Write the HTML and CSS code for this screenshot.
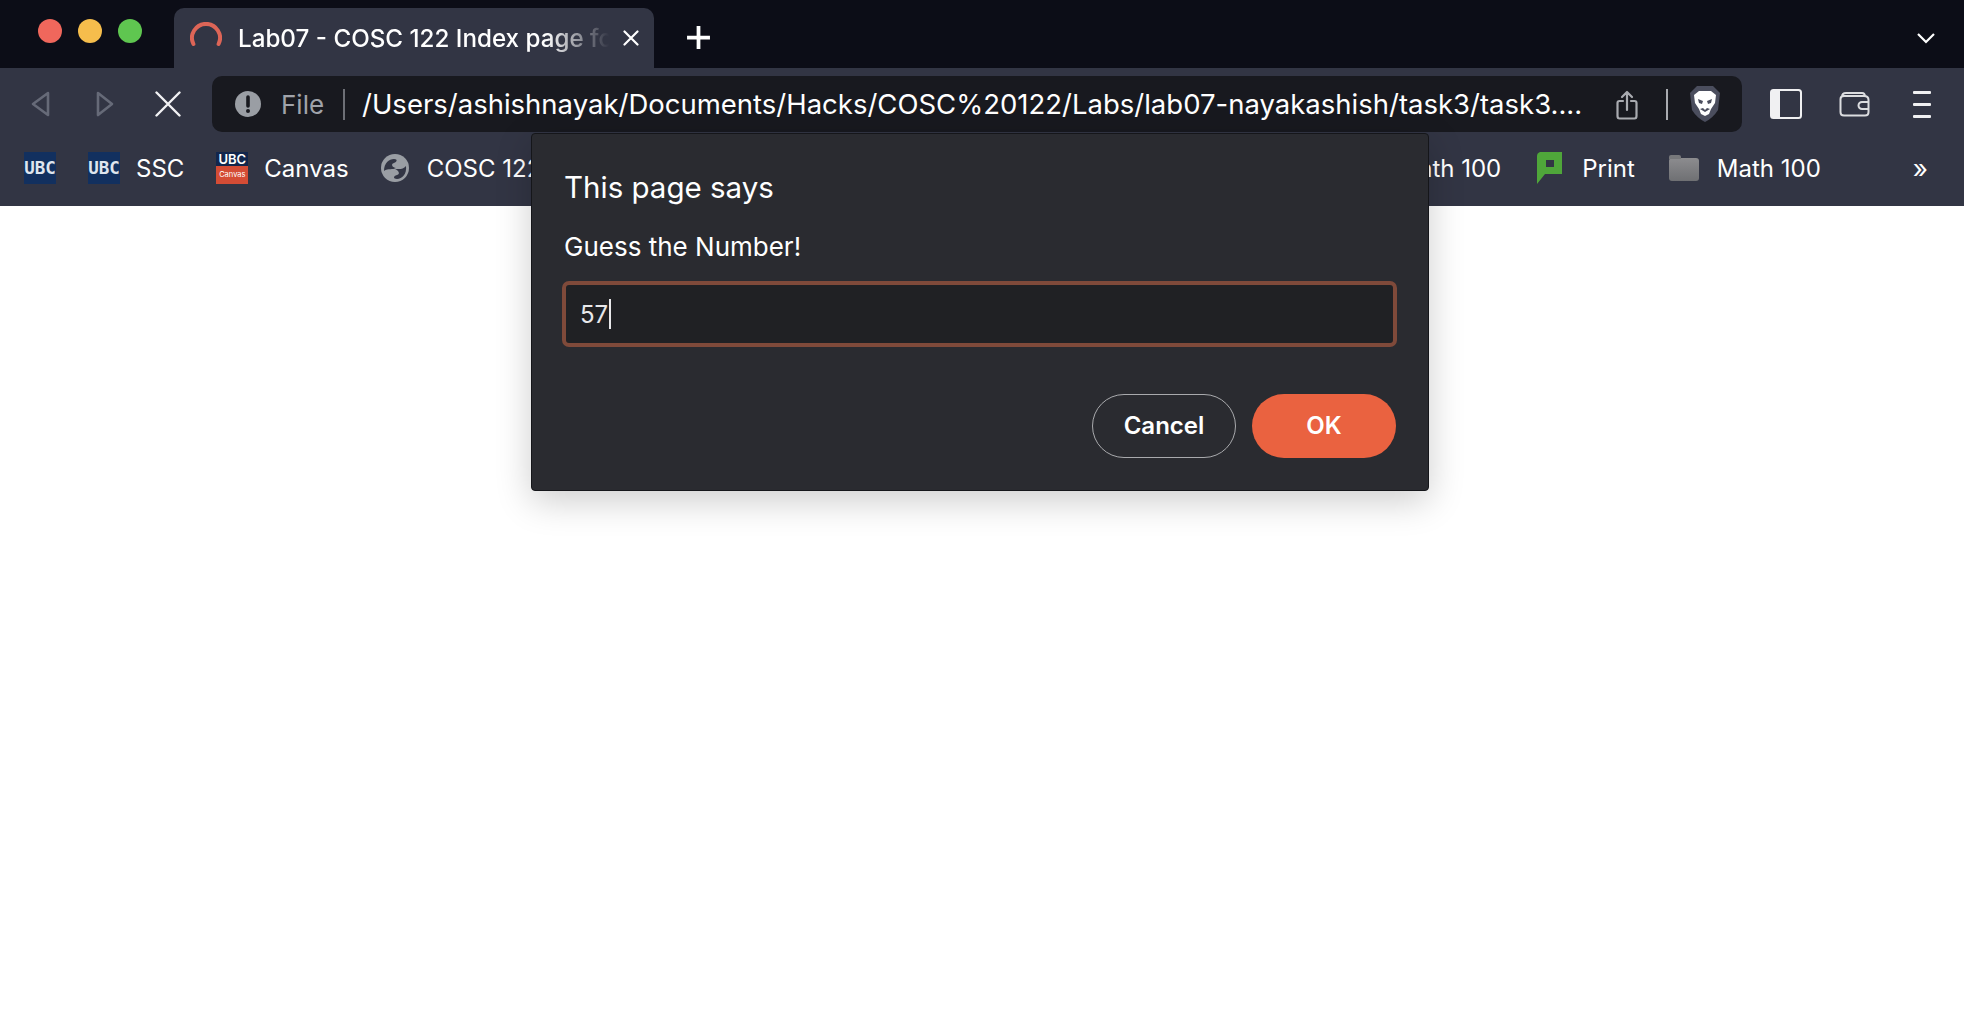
FILE: index.html
```html
<!DOCTYPE html>
<html>
<head>
    <title>Lab07 - COSC 122 Index page</title>
    <link rel="stylesheet" href="styles.css">
</head>
<body>
    <div class="tabstrip">
        <div class="lights">
            <span class="light red"></span>
            <span class="light yellow"></span>
            <span class="light green"></span>
        </div>
        <div class="tab">
            <svg class="spinner" viewBox="0 0 32 32"><path d="M3.4 22 A14 14 0 1 1 28.6 22" fill="none" stroke="#dd6557" stroke-width="4" stroke-linecap="round"/></svg>
            <span class="tab-title">Lab07 - COSC 122 Index page for Lab 7</span>
            <svg class="tab-close" viewBox="0 0 16 16"><path d="M1.5 1.5 L14.5 14.5 M14.5 1.5 L1.5 14.5" stroke="#fff" stroke-width="2.2" stroke-linecap="round"/></svg>
        </div>
        <svg class="new-tab" viewBox="0 0 24 24"><path d="M12 1 V23 M1 12 H23" stroke="#fff" stroke-width="3.6"/></svg>
        <svg class="tab-menu" viewBox="0 0 20 12"><path d="M2 2 L10 10 L18 2" fill="none" stroke="#fff" stroke-width="2.2"/></svg>
    </div>

    <div class="toolbar">
        <div class="nav">
            <svg class="nav-back" viewBox="0 0 19 26"><path d="M17 2 L2 13 L17 24 Z" fill="none" stroke="#666a78" stroke-width="2.6" stroke-linejoin="round"/></svg>
            <svg class="nav-forward" viewBox="0 0 18 26"><path d="M2 2 L16 13 L2 24 Z" fill="none" stroke="#666a78" stroke-width="2.6" stroke-linejoin="round"/></svg>
            <svg class="nav-stop" viewBox="0 0 26 26"><path d="M1.5 1.5 L24.5 24.5 M24.5 1.5 L1.5 24.5" stroke="#f2f2f4" stroke-width="2.4" stroke-linecap="round"/></svg>
        </div>
        <div class="addressbar">
            <svg class="warn" viewBox="0 0 26 26"><circle cx="13" cy="13" r="13" fill="#9a9ea4"/><path d="M13 6 V15" stroke="#18191f" stroke-width="3.6" stroke-linecap="round"/><circle cx="13" cy="20" r="2" fill="#18191f"/></svg>
            <span class="scheme">File</span>
            <span class="addr-divider"></span>
            <span class="url">/Users/ashishnayak/Documents/Hacks/COSC%20122/Labs/lab07-nayakashish/task3/task3....</span>
            <svg class="share" viewBox="0 0 22 30"><path d="M7 11 H3.5 Q1.5 11 1.5 13 V26 Q1.5 28.5 3.5 28.5 H18.5 Q20.5 28.5 20.5 26 V13 Q20.5 11 18.5 11 H15 M11 20 V2 M6 7 L11 2 L16 7" fill="none" stroke="#a9abb0" stroke-width="2.2" stroke-linecap="round" stroke-linejoin="round"/></svg>
            <span class="addr-divider right"></span>
            <svg class="lion" viewBox="0 0 32 38">
                <path d="M8 1 H24 L31 8 L29 25 Q24 33 16 37 Q8 33 3 25 L1 8 Z" fill="#4b4e5e"/>
                <path d="M10 6 H22 L27 10 L26 18 L22 24 L20 29 L16 31 L12 29 L10 24 L6 18 L5 10 Z" fill="#fff"/>
                <path d="M9 14 L14 16 L13 19 L10 18 Z M23 14 L18 16 L19 19 L22 18 Z M11 24 L14 23 L16 25 L18 23 L21 24 L16 27 Z" fill="#4b4e5e"/>
            </svg>
        </div>
        <div class="tools">
            <svg class="sidebar" viewBox="0 0 32 30"><rect x="1" y="1" width="30" height="28" rx="2.5" fill="none" stroke="#f0f0f2" stroke-width="2"/><rect x="1" y="1" width="9" height="28" fill="#f0f0f2"/></svg>
            <svg class="wallet" viewBox="0 0 31 26"><path d="M3 6 Q3 2 7 2 H23 Q26 2 26 6 M1.5 8 Q1.5 5 5 5 H25 Q29.5 5 29.5 9 V21 Q29.5 24.5 26 24.5 H5 Q1.5 24.5 1.5 21 Z" fill="none" stroke="#dcdde0" stroke-width="2"/><path d="M29 11 H23 A3.5 3.5 0 0 0 23 18 H29" fill="none" stroke="#dcdde0" stroke-width="2"/></svg>
            <div class="menu"><span></span><span></span><span></span></div>
        </div>
    </div>

    <div class="bookmarks">
        <div class="bm-left">
            <div class="bm">
                <div class="ubc-icon">UBC</div>
            </div>
            <div class="bm">
                <div class="ubc-icon">UBC</div>
                <span>SSC</span>
            </div>
            <div class="bm">
                <div class="canvas-icon"><b>UBC</b><i>Canvas</i></div>
                <span>Canvas</span>
            </div>
            <div class="bm bm-cosc">
                <svg class="globe" viewBox="0 0 28 28"><circle cx="14" cy="14" r="14" fill="#9a9ea4"/><path d="M3 17 C3 9 8 5 13 5 C17 5 16 8 13 9 C9 10 12 14 15 14 C12 16 7 14 3 17 Z M25 12 C26 20 21 25 16 25 C12 25 12 22 16 21 C20 20 17 16 14 15 C18 15 22 16 25 12 Z" fill="#323544"/></svg>
                <span>COSC 122</span>
            </div>
        </div>
        <div class="bm-right">
            <div class="bm"><span>Math 100</span></div>
            <div class="bm print">
                <svg class="print-icon" viewBox="0 0 25 32"><path d="M3 0 H25 V22 H8 L0 32 V4 Q0 1 3 0 Z" fill="#4fa63a"/><rect x="9" y="8" width="8" height="7" fill="#323544"/></svg>
                <span>Print</span>
            </div>
            <div class="bm">
                <div class="folder"></div>
                <span>Math 100</span>
            </div>
            <span class="more">»</span>
        </div>
    </div>

    <div class="page"></div>

    <div class="dialog">
        <h2 class="dialog-title">This page says</h2>
        <p class="dialog-msg">Guess the Number!</p>
        <div class="dialog-input"><span>57</span><span class="caret"></span></div>
        <div class="dialog-buttons">
            <button class="btn btn-cancel">Cancel</button>
            <button class="btn btn-ok">OK</button>
        </div>
    </div>
</body>
</html>
```

FILE: styles.css
```css
* {
    box-sizing: border-box;
}

html,
body {
    height: 100%;
}

body {
    margin: 0;
    display: flex;
    flex-direction: column;
    font-family: Inter, "Noto Sans", sans-serif;
    background-color: #fff;
    color: #fff;
    overflow: hidden;
}

svg {
    display: block;
    flex: none;
}

/* tab strip */
.tabstrip {
    height: 68px;
    flex: none;
    display: flex;
    align-items: flex-end;
    padding-left: 38px;
    padding-right: 28px;
    background-color: #0c0d17;
}

.lights {
    display: flex;
    gap: 16px;
    align-self: flex-start;
    margin-top: 19px;
}

.light {
    width: 24px;
    height: 24px;
    border-radius: 50%;
}

.red {
    background-color: #f0675c;
}

.yellow {
    background-color: #f6bd4c;
}

.green {
    background-color: #5fc650;
}

.tab {
    width: 480px;
    height: 60px;
    margin-left: 32px;
    padding: 0 15px 0 16px;
    display: flex;
    align-items: center;
    background-color: #323544;
    border-radius: 10px 10px 0 0;
}

.spinner {
    width: 32px;
    height: 32px;
}

.tab-title {
    flex: 1;
    margin-left: 16px;
    font-size: 24.2px;
    font-weight: 500;
    white-space: nowrap;
    overflow: hidden;
    -webkit-mask-image: linear-gradient(to right, #000 82%, transparent 99%);
    mask-image: linear-gradient(to right, #000 82%, transparent 99%);
}

.tab-close {
    width: 16px;
    height: 16px;
    margin-left: 10px;
}

.new-tab {
    width: 25px;
    height: 25px;
    margin-left: 32px;
    margin-bottom: 18px;
}

.tab-menu {
    width: 20px;
    height: 12px;
    margin-left: auto;
    margin-bottom: 24px;
}

/* toolbar */
.toolbar {
    height: 64px;
    flex: none;
    display: flex;
    padding-top: 8px;
    padding-right: 33px;
    background-color: #323544;
}

.nav {
    display: flex;
    align-items: center;
    height: 56px;
    padding-left: 31px;
    padding-right: 31px;
}

.nav-back {
    width: 19px;
    height: 26px;
}

.nav-forward {
    width: 18px;
    height: 26px;
    margin-left: 46px;
}

.nav-stop {
    width: 26px;
    height: 26px;
    margin-left: 41px;
}

.addressbar {
    width: 1530px;
    height: 56px;
    display: flex;
    align-items: center;
    padding-left: 23px;
    background-color: #18191f;
    border-radius: 10px;
}

.warn {
    width: 26px;
    height: 26px;
}

.scheme {
    width: 44px;
    margin-left: 20px;
    font-size: 26px;
    color: #a0a3aa;
}

.addr-divider {
    width: 2px;
    height: 31px;
    margin-left: 18px;
    background-color: #6d6f76;
}

.addr-divider.right {
    margin-left: 28px;
    background-color: #a9abb0;
}

.url {
    flex: 1;
    margin-left: 17px;
    padding: 2px 0;
    font-size: 27.5px;
    white-space: nowrap;
}

.share {
    width: 22px;
    height: 30px;
    margin-top: 2px;
}

.lion {
    width: 32px;
    height: 38px;
    margin-left: 21px;
    margin-right: 21px;
}

.tools {
    display: flex;
    align-items: center;
    height: 56px;
    margin-left: 28px;
}

.sidebar {
    width: 32px;
    height: 30px;
}

.wallet {
    width: 31px;
    height: 26px;
    margin-left: 37px;
}

.menu {
    width: 18px;
    margin-left: 43px;
    display: flex;
    flex-direction: column;
    gap: 9px;
}

.menu span {
    height: 3px;
    background-color: #f0f0f2;
    border-radius: 1px;
}

/* bookmarks */
.bookmarks {
    height: 74px;
    flex: none;
    display: flex;
    align-items: center;
    justify-content: space-between;
    padding: 0 36px 2px 24px;
    font-size: 24px;
    background-color: #323544;
}

.bm-left,
.bm-right {
    display: flex;
    align-items: center;
}

.bm {
    display: flex;
    align-items: center;
}

.bm-left .bm + .bm {
    margin-left: 32px;
}

.bm-right .bm + .bm {
    margin-left: 34px;
}

.bm-right .bm.print {
    margin-left: 36px;
}

.bm-left span {
    margin-left: 16px;
}

.bm-left .bm-cosc {
    margin-left: 33px;
}

.bm-left .bm-cosc span {
    margin-left: 18px;
}

.ubc-icon {
    width: 32px;
    height: 32px;
    overflow: hidden;
    background-color: #12305f;
    color: #dfe5ee;
    font-family: "DejaVu Sans Mono", monospace;
    font-size: 17.5px;
    font-weight: 700;
    line-height: 32px;
    text-align: center;
}

.canvas-icon {
    width: 32px;
    height: 32px;
    display: flex;
    flex-direction: column;
    text-align: center;
}

.canvas-icon b {
    height: 14px;
    font-size: 13px;
    font-weight: 600;
    line-height: 14px;
    background-color: #12264c;
}

.canvas-icon i {
    height: 18px;
    font-size: 7.5px;
    font-style: normal;
    line-height: 18px;
    background-color: #d44c35;
}

.globe {
    width: 28px;
    height: 28px;
}

.print-icon {
    width: 25px;
    height: 32px;
    margin-right: 20px;
}

.folder {
    position: relative;
    width: 30px;
    height: 23px;
    margin-top: 2px;
    margin-right: 18px;
    background: linear-gradient(#8c8c8f, #6f7073);
    border-radius: 3px;
}

.folder::before {
    content: "";
    position: absolute;
    left: 0;
    top: -3px;
    width: 12px;
    height: 4px;
    background-color: #77787b;
    border-radius: 2px 2px 0 0;
}

.more {
    margin-left: 92px;
    font-size: 26px;
}

.page {
    flex: 1;
    background-color: #fff;
}

/* prompt dialog */
.dialog {
    position: absolute;
    left: 531px;
    top: 133px;
    width: 898px;
    height: 358px;
    padding: 35px 31px 0 32px;
    background-color: #2a2b30;
    border: 1px solid #15161a;
    border-radius: 4px;
    box-shadow: 0 10px 36px rgba(0, 0, 0, 0.2);
}

.dialog-title {
    margin: 0;
    font-size: 29.5px;
    font-weight: 400;
    line-height: 36px;
}

.dialog-msg {
    margin: 27px 0 0;
    font-size: 26px;
    line-height: 30px;
}

.dialog-input {
    height: 66px;
    margin-top: 19px;
    margin-left: -2px;
    padding-left: 14px;
    display: flex;
    align-items: center;
    font-size: 24px;
    color: #e8e8ea;
    background-color: #202124;
    border: 4px solid #7f4a3a;
    border-radius: 7px;
}

.caret {
    width: 2px;
    height: 30px;
    margin-left: 1px;
    background-color: #e8e8ea;
}

.dialog-buttons {
    display: flex;
    justify-content: flex-end;
    gap: 16px;
    margin-top: 47px;
    margin-right: 1px;
}

.btn {
    width: 144px;
    height: 64px;
    padding: 0 0 2px;
    font-family: Inter, "Noto Sans", sans-serif;
    font-size: 24px;
    font-weight: 600;
    color: #fff;
    border-radius: 32px;
    cursor: pointer;
}

.btn-cancel {
    background-color: transparent;
    border: 1px solid #a9aaad;
}

.btn-ok {
    background-color: #ea6240;
    border: none;
}
```
